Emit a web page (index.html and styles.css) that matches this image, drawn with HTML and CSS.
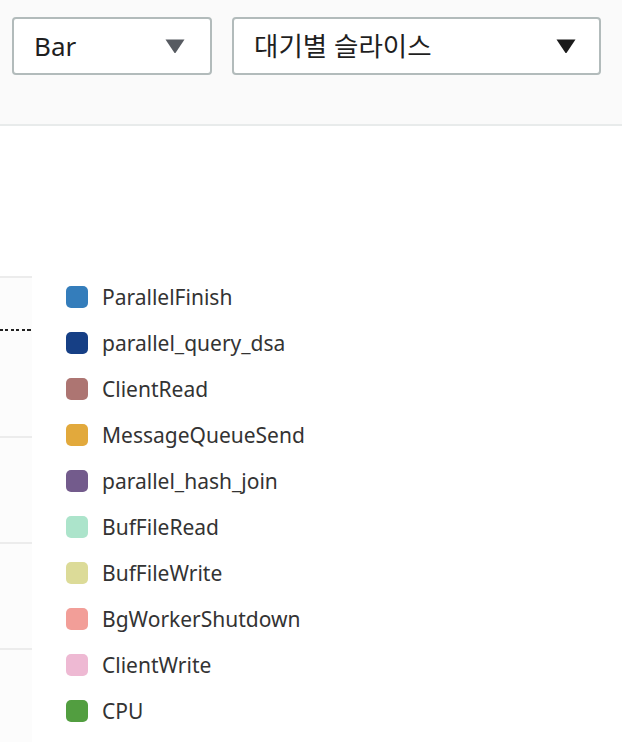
FILE: index.html
```html
<!DOCTYPE html>
<html lang="ko">
<head>
<meta charset="utf-8">
<link rel="stylesheet" href="styles.css">
</head>
<body>
<div class="toolbar">
  <div class="select select-type">
    <span class="select-label">Bar</span>
    <svg class="caret caret-gray" width="22" height="16" viewBox="0 0 22 16"><path d="M1.5 1.5 H20.5 L11.8 14.6 Q11 15.6 10.2 14.6 Z" /></svg>
  </div>
  <div class="select select-group">
    <span class="select-label select-label-ko">대기별 슬라이스</span>
    <svg class="caret caret-dark" width="22" height="16" viewBox="0 0 22 16"><path d="M1.5 1.5 H20.5 L11.8 14.6 Q11 15.6 10.2 14.6 Z" /></svg>
  </div>
</div>
<div class="main">
  <div class="chart">
    <div class="band band-first"><div class="dotted"></div></div>
    <div class="band"></div>
    <div class="band"></div>
    <div class="band band-last"></div>
  </div>
  <ul class="legend">
    <li class="item"><span class="swatch c1"></span>ParallelFinish</li>
    <li class="item"><span class="swatch c2"></span>parallel_query_dsa</li>
    <li class="item"><span class="swatch c3"></span>ClientRead</li>
    <li class="item"><span class="swatch c4"></span>MessageQueueSend</li>
    <li class="item"><span class="swatch c5"></span>parallel_hash_join</li>
    <li class="item"><span class="swatch c6"></span>BufFileRead</li>
    <li class="item"><span class="swatch c7"></span>BufFileWrite</li>
    <li class="item"><span class="swatch c8"></span>BgWorkerShutdown</li>
    <li class="item"><span class="swatch c9"></span>ClientWrite</li>
    <li class="item"><span class="swatch c10"></span>CPU</li>
  </ul>
</div>
</body>
</html>
```
FILE: styles.css
```css
* { box-sizing: border-box; }
html, body { margin: 0; padding: 0; }
body {
  width: 622px;
  height: 742px;
  overflow: hidden;
  background: #ffffff;
  font-family: "Noto Sans", "Noto Sans CJK KR", sans-serif;
  color: #222;
}
.toolbar {
  height: 126px;
  background: #fafafa;
  border-bottom: 2px solid #e8ebeb;
  display: flex;
  align-items: flex-start;
  gap: 20px;
  padding: 17px 0 0 12px;
}
.select {
  height: 58px;
  background: #fff;
  border: 2px solid #b2bbbb;
  border-radius: 4px;
  display: flex;
  align-items: center;
  justify-content: space-between;
  padding: 0 24px 0 20px;
}
.select-type { width: 200px; }
.select-group { width: 369px; padding-right: 22px; }
.select-label {
  font-size: 26px;
  line-height: 1;
  color: #1f1f1f;
}
.select-label-ko { font-size: 26.5px; }
.caret { display: block; }
.caret-gray { fill: #575b61; }
.caret-dark { fill: #1b1b1b; }
.main {
  display: flex;
  align-items: flex-start;
  margin-top: 150px;
  height: 466px;
  overflow: hidden;
}
.chart {
  width: 32px;
  flex: none;
  height: 466px;
  background: #fcfcfc;
  display: flex;
  flex-direction: column;
}
.band {
  border-top: 2px solid #ececec;
  height: 106px;
  flex: none;
}
.band-first { height: 160px; padding-top: 51px; }
.band-last { flex: 1; }
.dotted {
  height: 2px;
  background: repeating-linear-gradient(to right, #222 0 3px, transparent 3px 5.5px);
}
.legend {
  list-style: none;
  margin: 0 0 0 34px;
  padding: 10px 0 0 0;
}
.item {
  display: flex;
  align-items: center;
  gap: 14px;
  height: 22px;
  margin-bottom: 24px;
  font-size: 21px;
  line-height: 1;
  color: #333;
  white-space: nowrap;
}
.swatch {
  width: 22px;
  height: 22px;
  border-radius: 5px;
  flex: none;
}
.c1 { background: #347dbb; }
.c2 { background: #163f85; }
.c3 { background: #ad7572; }
.c4 { background: #e2a93c; }
.c5 { background: #735b8c; }
.c6 { background: #ace4cb; }
.c7 { background: #dcdb98; }
.c8 { background: #f29e98; }
.c9 { background: #eeb9d3; }
.c10 { background: #529e40; }
```
